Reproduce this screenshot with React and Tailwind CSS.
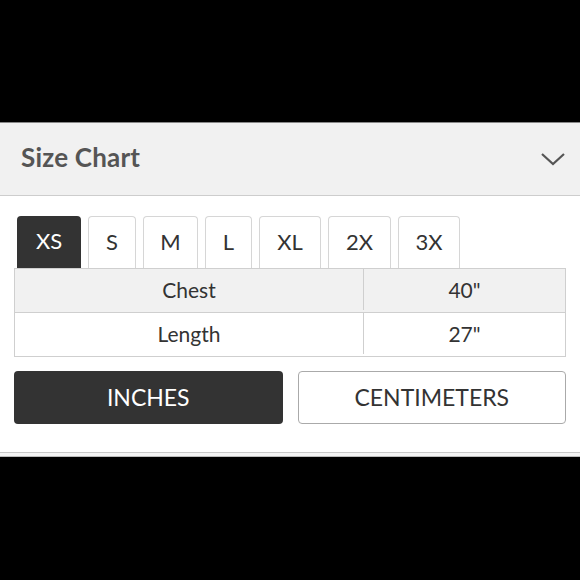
import React, { useState } from "react";

const sizes = ["XS", "S", "M", "L", "XL", "2X", "3X"];
const tabWidths = {
  XS: "w-[64px]",
  S: "w-[48px]",
  M: "w-[55px]",
  L: "w-[47px]",
  XL: "w-[62px]",
  "2X": "w-[63px]",
  "3X": "w-[62px]",
};

export default function App() {
  const [size, setSize] = useState("XS");
  const [unit, setUnit] = useState("in");

  return (
    <div
      className="w-[580px] h-[580px] bg-black flex flex-col"
      style={{ fontFamily: "Lato, 'Open Sans', sans-serif" }}
    >
      <div className="h-[122px] shrink-0" />

      {/* Header */}
      <div className="h-[74px] shrink-0 bg-[#f1f1f1] border-t border-[#888] border-b border-b-[#cdcdcd] flex items-center justify-between pl-[21px] pr-[14px]">
        <h2 className="text-[26px] font-bold text-[#555] -mt-[3px] tracking-[0.2px]">Size Chart</h2>
        <svg width="26" height="14" viewBox="0 0 26 14" fill="none">
          <path d="M2 2 L13 12 L24 2" stroke="#555" strokeWidth="2.2" />
        </svg>
      </div>

      {/* Body */}
      <div className="h-[256px] shrink-0 bg-white px-[14px] pt-[20px]">
        {/* Tabs */}
        <div className="flex gap-[7px] pl-[3px] h-[52px]">
          {sizes.map((s) => (
            <button
              key={s}
              onClick={() => setSize(s)}
              className={`${tabWidths[s]} h-full pb-[3px] rounded-t-[4px] text-[22px] flex items-center justify-center ${
                size === s
                  ? "bg-[#333] text-white"
                  : "bg-white text-[#333] border border-b-0 border-[#d6d6d6]"
              }`}
            >
              {s}
            </button>
          ))}
        </div>

        {/* Table */}
        <div className="border border-[#cfcfcf] text-[21px] text-[#333]">
          <div className="flex h-[44px] pb-[2px] bg-[#f1f1f1] border-b border-[#cfcfcf]">
            <div className="w-[349px] flex items-center justify-center border-r border-[#cfcfcf]">Chest</div>
            <div className="flex-1 flex items-center justify-center">40"</div>
          </div>
          <div className="flex h-[43px] pb-[2px]">
            <div className="w-[349px] flex items-center justify-center border-r border-[#cfcfcf]">Length</div>
            <div className="flex-1 flex items-center justify-center">27"</div>
          </div>
        </div>

        {/* Units */}
        <div className="flex gap-[15px] mt-[14px]">
          <button
            onClick={() => setUnit("in")}
            className={`w-[269px] h-[53px] rounded-[4px] text-[23px] ${
              unit === "in" ? "bg-[#333] text-white" : "bg-white text-[#333] border border-[#aaa]"
            }`}
          >
            INCHES
          </button>
          <button
            onClick={() => setUnit("cm")}
            className={`w-[269px] h-[53px] rounded-[4px] text-[23px] ${
              unit === "cm" ? "bg-[#333] text-white" : "bg-white text-[#333] border border-[#aaa]"
            }`}
          >
            CENTIMETERS
          </button>
        </div>
      </div>

      {/* Bottom edge */}
      <div className="h-[5px] shrink-0 bg-[#f4f4f4] border-t border-[#c8c8c8] border-b border-b-[#bbb]" />
    </div>
  );
}
